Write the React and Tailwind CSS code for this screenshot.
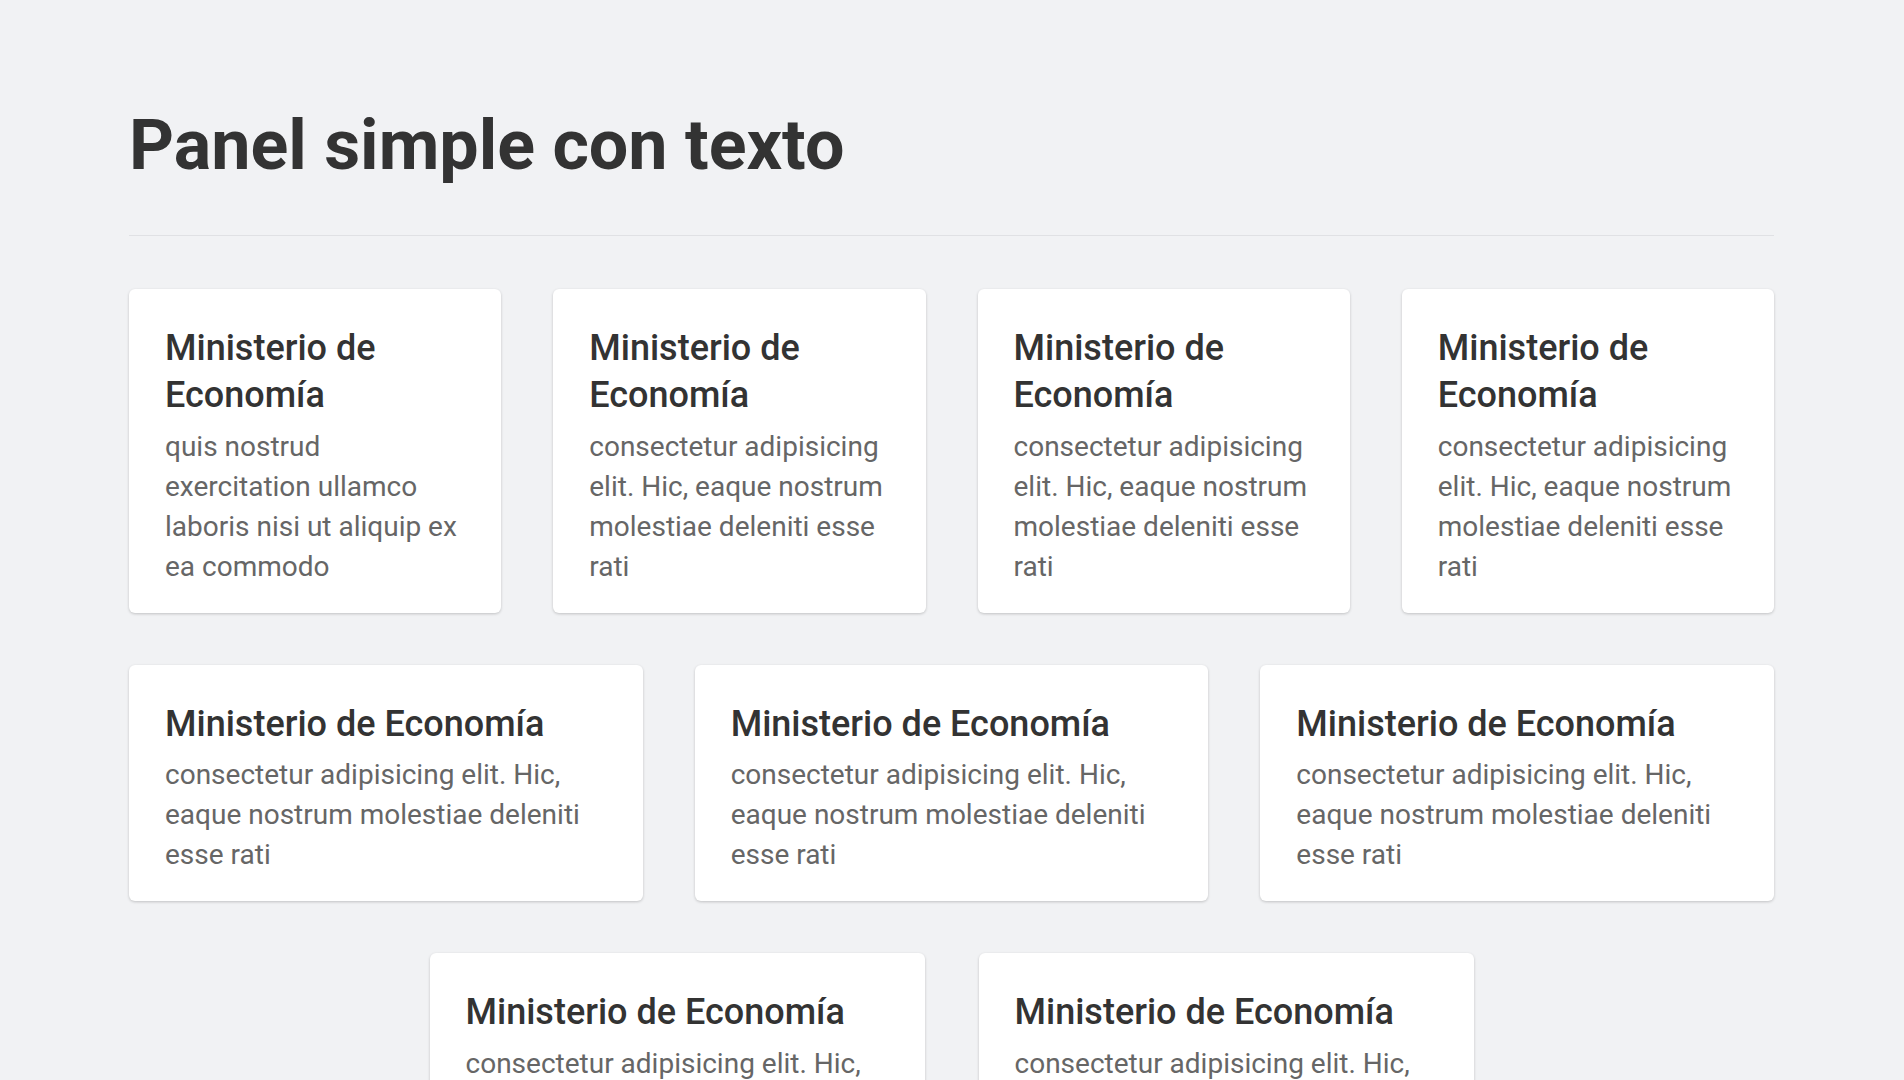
const BODY = 'consectetur adipisicing elit. Hic, eaque nostrum molestiae deleniti esse rati';

const Card = ({ text = BODY, className = '' }) => (
  <div className={`bg-white rounded-md shadow-[0_1px_3px_rgba(0,0,0,0.2)] pt-9 px-9 pb-[26px] ${className}`}>
    <h3 className="text-[36px] leading-[46.8px] font-medium text-[#333]">Ministerio de Economía</h3>
    <p className="mt-2 text-[28px] leading-[40px] text-[#666]">{text}</p>
  </div>
);

export default function App() {
  return (
    <div className="min-h-screen bg-[#f1f2f4] font-[Roboto,sans-serif] pl-[129px] pr-[130px] pt-[110px] pb-16">
      <h1 className="text-[70px] leading-[70px] font-bold text-[#333]">Panel simple con texto</h1>
      <hr className="mt-[55px] border-[#e0e1e4]" />

      <div className="mt-[53px] grid grid-cols-4 gap-[52px]">
        <Card text="quis nostrud exercitation ullamco laboris nisi ut aliquip ex ea commodo" />
        <Card />
        <Card />
        <Card />
      </div>

      <div className="mt-[52px] grid grid-cols-3 gap-[52px]">
        <Card />
        <Card />
        <Card />
      </div>

      <div className="mt-[52px] flex justify-center gap-[54px]">
        <Card className="w-[495px]" />
        <Card className="w-[495px]" />
      </div>
    </div>
  );
}
